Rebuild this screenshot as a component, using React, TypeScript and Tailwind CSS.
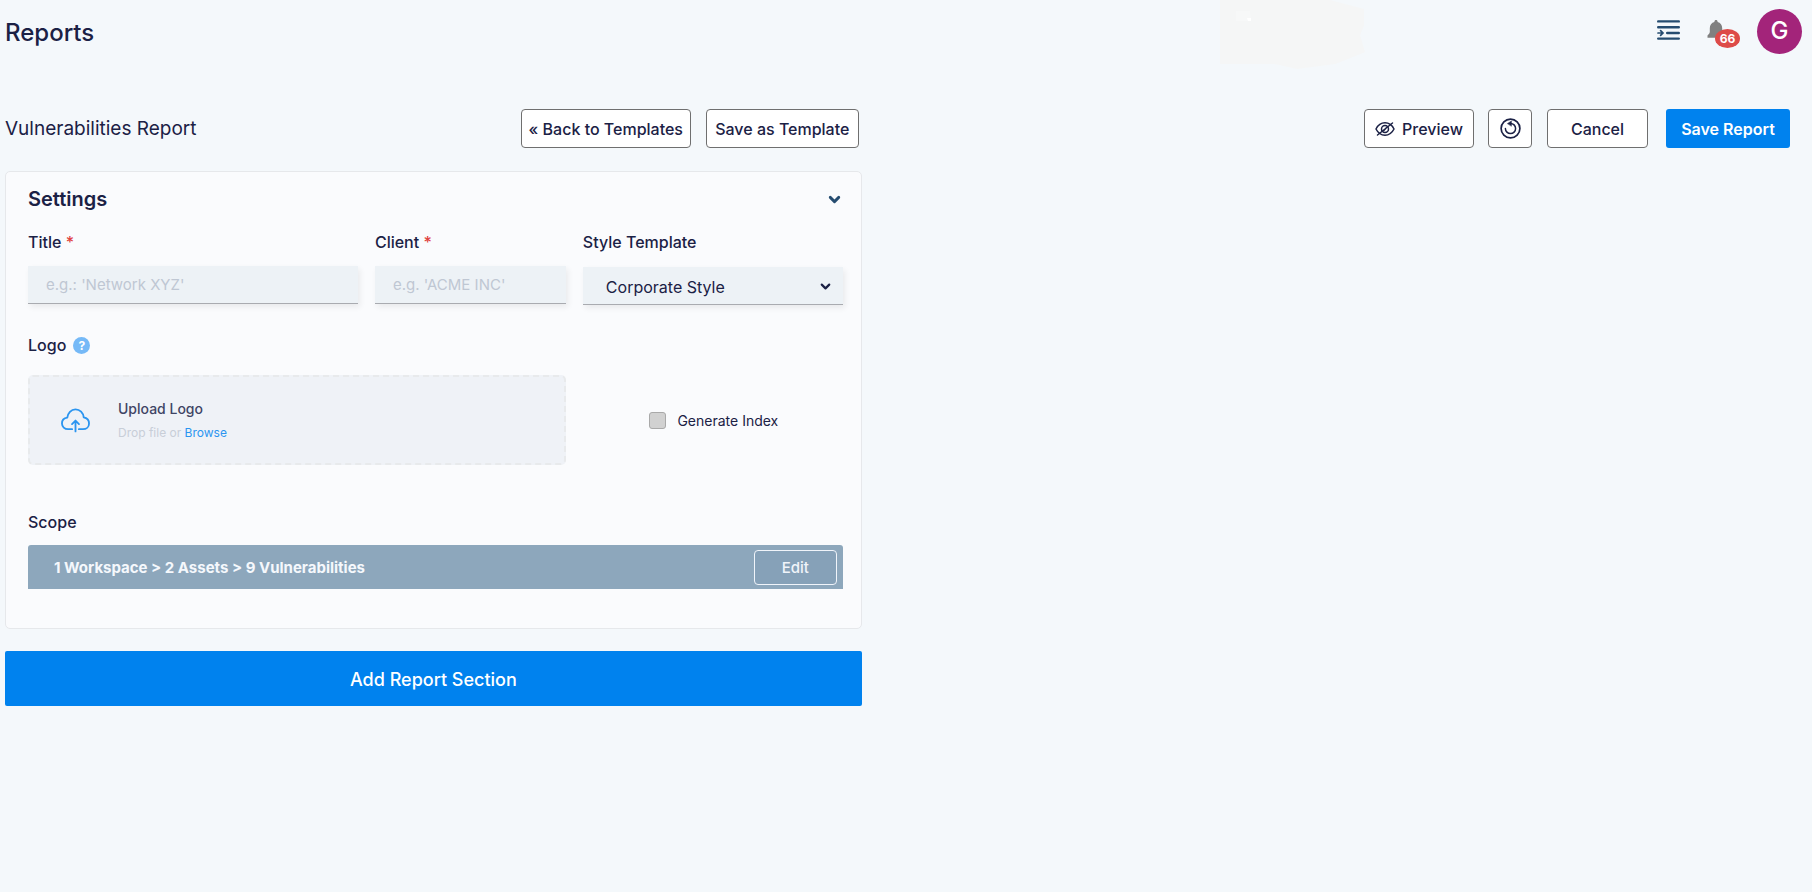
import { useState } from 'react'
import { ChevronDown } from 'lucide-react'

const outlineButton =
  'h-[39px] shrink-0 flex items-center justify-center rounded-[4px] border border-[#6f6f6f] bg-white text-base font-medium text-[#1b2145] whitespace-nowrap'

const fieldBox = 'w-full h-[38px] bg-[#edf2f6] border-b border-[#a9abb0] shadow-[2px_3px_6px_rgba(0,0,0,0.07)] outline-none'

function MenuIcon() {
  return (
    <svg width="23" height="20" viewBox="0 0 23 20" fill="none" stroke="#254c70" strokeWidth="2.4" strokeLinecap="round" aria-hidden="true">
      <path d="M1.2 1.4h20.6M1.2 7.2h20.6M10.2 13h11.6M1.2 18.6h20.6" />
      <path d="M1 13h4.4M3.6 10.6 6 13l-2.4 2.4" strokeWidth="1.7" />
    </svg>
  )
}

function BellIcon() {
  return (
    <svg width="18" height="19" viewBox="0 0 18 19" fill="#808080" aria-hidden="true">
      <path d="M9 0c.9 0 1.6.7 1.6 1.6v.5c2.9.7 4.6 3 4.6 6.1v3.6c0 1.6 1 2.4 2.3 3.7v2.2H.5v-2.2c1.3-1.3 2.300-2.100 2.300-3.700V8.200c0-3.100 1.700-5.400 4.600-6.100v-.5C7.400.7 8.100 0 9 0z" />
    </svg>
  )
}

function EyeOffIcon() {
  return (
    <svg width="20" height="16" viewBox="0 0 20 16" fill="none" stroke="#1b2145" strokeWidth="1.5" strokeLinecap="round" aria-hidden="true">
      <path d="M1 8c2-4 5.2-6.200 9-6.200S17 4 19 8c-2 4-5.200 6.200-9 6.200S3 12 1 8z" />
      <circle cx="10" cy="8" r="3.5" />
      <path d="M2.500 14 17.500 2M8.600 9.800l3-3.200" />
    </svg>
  )
}

function ResetIcon() {
  return (
    <svg width="21" height="21" viewBox="0 0 21 21" fill="none" stroke="#1b2145" strokeWidth="1.7" strokeLinecap="round" aria-hidden="true">
      <circle cx="10.5" cy="10.5" r="9.4" />
      <path d="M5.400 10.500a5.100 5.100 0 1 0 5.100-5.100" strokeWidth="1.5" />
      <path d="M7.600 5.400 11.400 3v4.900z" fill="#1b2145" strokeWidth="0.5" />
    </svg>
  )
}

function CloudIcon() {
  return (
    <svg width="29" height="25" viewBox="0 0 30 25" fill="none" stroke="#2b95f0" strokeWidth="1.9" strokeLinecap="round" strokeLinejoin="round" aria-hidden="true">
      <path d="M11.500 21.500H7.300C3.800 21.500 1 19 1 15.600c0-3.200 2.300-5.600 5.500-6C7 4.700 10.400 1 15 1s8 3.500 8.500 8.200c3.200.6 5.500 3 5.500 6.300 0 3.500-2.700 6-6.300 6h-4.200" />
      <path d="M15 23.800V13M11.400 16.200 15 12.600l3.600 3.600" />
    </svg>
  )
}

export default function App() {
  const [title, setTitle] = useState('')
  const [client, setClient] = useState('')
  const [generateIndex, setGenerateIndex] = useState(false)

  return (
    <div className="relative min-h-screen bg-[#f4f8fb] font-['Inter','Liberation_Sans',sans-serif] text-[#1b2145]">
      {/* Faint backdrop shape behind the header */}
      <svg className="absolute top-0 left-[1220px] pointer-events-none" width="146" height="70" viewBox="0 0 146 70" aria-hidden="true">
        <path d="M0 0h110l34 9v16l-4 10 5 17-30 12-38 5-22-5H0z" fill="#f5f6f6" />
        <path d="M16 11h14l1 10H16z" fill="#f7f8f8" />
        <path d="M27 18h4v3h-3z" fill="#ffffff" />
      </svg>

      <header className="relative flex items-center justify-between h-16 pl-[5px] pr-[10px]">
        <h1 className="text-2xl font-medium pt-[2px]">Reports</h1>
        <div className="flex items-center pb-[2px]">
          <button aria-label="Toggle menu" className="mr-[27px] mb-[2px]"><MenuIcon /></button>
          <button aria-label="Notifications" className="relative w-[33px] mr-[17px] mb-[3px]">
            <BellIcon />
            <span className="absolute top-[9px] left-2 w-[25px] h-[19px] rounded-[50%] bg-[#dd4b48] text-white text-xs leading-[20px] font-bold text-center">66</span>
          </button>
          <button className="w-[45px] h-[45px] rounded-full bg-[#a3247a] text-white text-2xl font-medium">G</button>
        </div>
      </header>

      <div className="flex items-center pl-[5px] pr-[22px] pt-[45px]">
        <div className="w-[48%] flex items-center pr-[3px]">
          <h2 className="mr-auto text-[19px] leading-7">Vulnerabilities Report</h2>
          <button className={`${outlineButton} w-[170px] mr-[15px]`}>« Back to Templates</button>
          <button className={`${outlineButton} w-[153px]`}>Save as Template</button>
        </div>
        <div className="flex-1 flex items-center justify-end">
          <button className={`${outlineButton} w-[110px] gap-[7px] mr-[14px]`}><EyeOffIcon /> Preview</button>
          <button className={`${outlineButton} w-11 mr-[15px]`} aria-label="Reset"><ResetIcon /></button>
          <button className={`${outlineButton} w-[101px] mr-[18px]`}>Cancel</button>
          <button className="w-[124px] h-[39px] shrink-0 rounded-[3px] bg-[#0082ee] text-white text-base font-semibold whitespace-nowrap">Save Report</button>
        </div>
      </div>

      <main className="pl-[5px] pr-[22px] pt-[23px]">
        <div className="w-[48%]">
          <section className="rounded-[5px] border border-[#e6e8eb] bg-[#fafbfd] pl-[22px] pr-[18px] pb-[39px]">
            <div className="flex items-center justify-between pt-3">
              <h3 className="text-xl leading-[30px] font-semibold">Settings</h3>
              <button aria-label="Collapse settings"><ChevronDown size={17} strokeWidth={4} className="text-[#254c70]" /></button>
            </div>

            <div className="grid grid-cols-[330fr_191fr_260fr] gap-x-[17px]">
              <div className="pt-4">
                <label htmlFor="title" className="block text-base leading-6 font-medium mb-3">Title <span className="text-[#e0413e]">*</span></label>
                <input
                  id="title"
                  value={title}
                  onChange={e => setTitle(e.target.value)}
                  placeholder="e.g.: 'Network XYZ'"
                  className={`${fieldBox} px-[18px] text-[15px] placeholder:text-[#bfc7d3]`}
                />
              </div>
              <div className="pt-4">
                <label htmlFor="client" className="block text-base leading-6 font-medium mb-3">Client <span className="text-[#e0413e]">*</span></label>
                <input
                  id="client"
                  value={client}
                  onChange={e => setClient(e.target.value)}
                  placeholder="e.g. 'ACME INC'"
                  className={`${fieldBox} px-[18px] text-[15px] placeholder:text-[#bfc7d3]`}
                />
              </div>
              <div className="pt-4">
                <label htmlFor="style" className="block text-base leading-6 font-medium mb-[13px]">Style Template</label>
                <div className="relative">
                  <select id="style" className={`${fieldBox} appearance-none pl-[23px] pt-[2px] text-base`}>
                    <option>Corporate Style</option>
                  </select>
                  <ChevronDown size={15} strokeWidth={3.5} className="absolute right-[10px] top-3 pointer-events-none" />
                </div>
              </div>

              <div className="col-span-3 flex items-center gap-[7px] mt-7 mb-[18px] text-base leading-6 font-medium">
                Logo
                <button aria-label="Logo help" className="w-[17px] h-[17px] rounded-full bg-[#75b9f7] text-white text-xs leading-[17px] font-bold">?</button>
              </div>

              <div className="col-span-2 h-[90px] flex items-center rounded-[5px] border-2 border-dashed border-[#e8eaec] bg-[#eff2f7] pl-[31px]">
                <CloudIcon />
                <div className="ml-7 pt-[2px]">
                  <p className="text-sm leading-6 font-medium text-[#3f4565]">Upload Logo</p>
                  <p className="text-xs leading-6 text-[#c8ced8]">Drop file or <a href="#browse" className="text-[#2b95f0]">Browse</a></p>
                </div>
              </div>
              <label className="flex items-center justify-center gap-[11px] pl-[2px] text-sm">
                <input
                  type="checkbox"
                  checked={generateIndex}
                  onChange={e => setGenerateIndex(e.target.checked)}
                  className="appearance-none w-[17px] h-[17px] rounded-[3px] border border-[#a9a9a9] bg-[#d1d1d1] checked:bg-[#0082ee]"
                />
                <span className="pt-[2px]">Generate Index</span>
              </label>
            </div>

            <h4 className="mt-[45px] mb-[11px] text-base leading-6 font-medium">Scope</h4>
            <div className="flex items-center justify-between h-11 rounded-t-[3px] bg-[#8da7bc] pl-[26px] pr-[6px]">
              <span className="pt-[2px] text-[15px] font-bold text-[#f5f8fc]">1 Workspace &gt; 2 Assets &gt; 9 Vulnerabilities</span>
              <button className="w-[83px] h-[35px] pt-[2px] rounded-[4px] border border-[#f0f4fa] bg-[#86a1b8] text-[#f0f4fa] text-[15px] font-medium">Edit</button>
            </div>
          </section>

          <button className="mt-[22px] w-full h-[55px] pt-[2px] rounded-[2px] bg-[#0082ee] text-white text-lg font-medium">Add Report Section</button>
        </div>
      </main>
    </div>
  )
}
